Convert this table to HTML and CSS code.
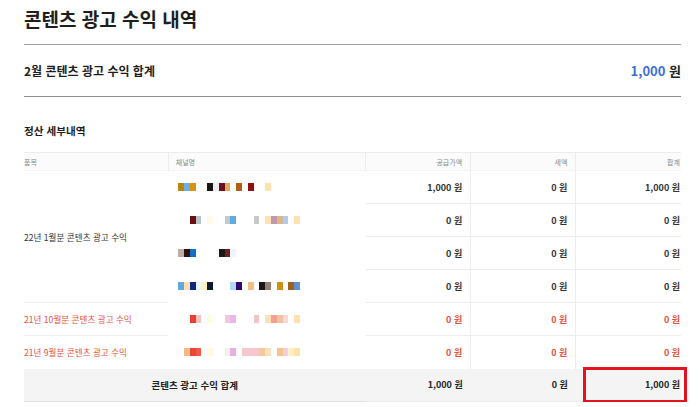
FILE: index.html
```html
<!DOCTYPE html>
<html lang="ko">
<head>
<meta charset="utf-8">
<title>콘텐츠 광고 수익 내역</title>
<link rel="stylesheet" href="styles.css">
</head>
<body>
<div class="page">
  <h1 class="title">콘텐츠 광고 수익 내역</h1>
  <div class="summary">
    <span class="summary-label">2월 콘텐츠 광고 수익 합계</span>
    <span class="summary-value"><span class="amount">1,000</span> 원</span>
  </div>
  <h2 class="section-title">정산 세부내역</h2>
  <table class="detail">
    <colgroup>
      <col class="c-item"><col class="c-channel"><col class="c-num"><col class="c-num"><col class="c-num">
    </colgroup>
    <thead>
      <tr>
        <th class="h-item">품목</th>
        <th class="h-channel">채널명</th>
        <th class="h-num">공급가액</th>
        <th class="h-num">세액</th>
        <th class="h-num last">합계</th>
      </tr>
    </thead>
    <tbody>
      <tr>
        <td class="item" rowspan="4">22년 1월분 콘텐츠 광고 수익</td>
        <td class="channel"><div class="chips"><span style="background:#b8860b"></span><span style="background:#6cb0e4"></span><span style="background:#d8920f"></span><span></span><span></span><span style="background:#151515"></span><span style="background:#ececec"></span><span style="background:#6b1020"></span><span style="background:#e8a860"></span><span></span><span style="background:#b06010"></span><span></span><span style="background:#901010"></span><span></span><span></span><span style="background:#fde2b0"></span></div></td>
        <td class="num">1,000 원</td>
        <td class="num sep">0 원</td>
        <td class="num sep last">1,000 원</td>
      </tr>
      <tr>
        <td class="channel"><div class="chips"><span></span><span></span><span style="background:#6b1010"></span><span style="background:#b8c4c8"></span><span></span><span style="background:#fffbe8"></span><span></span><span></span><span style="background:#c0c8d0"></span><span style="background:#60aae0"></span><span></span><span></span><span></span><span style="background:#c8c8c8"></span><span></span><span style="background:#fde0b8"></span><span style="background:#c09aa8"></span><span style="background:#d8b890"></span><span style="background:#b0cce8"></span><span></span><span style="background:#fde2b0"></span></div></td>
        <td class="num">0 원</td>
        <td class="num sep">0 원</td>
        <td class="num sep last">0 원</td>
      </tr>
      <tr>
        <td class="channel"><div class="chips"><span style="background:#b8b0a8"></span><span style="background:#301010"></span><span style="background:#1070c8"></span><span></span><span></span><span></span><span></span><span style="background:#181818"></span><span style="background:#702020"></span><span style="background:#eaf6fc"></span></div></td>
        <td class="num">0 원</td>
        <td class="num sep">0 원</td>
        <td class="num sep last">0 원</td>
      </tr>
      <tr>
        <td class="channel"><div class="chips"><span style="background:#60a8e0"></span><span style="background:#fce0b0"></span><span style="background:#102880"></span><span style="background:#eaf6fc"></span><span style="background:#fdf0c0"></span><span style="background:#101830"></span><span></span><span></span><span></span><span style="background:#b0d8f8"></span><span style="background:#300870"></span><span></span><span style="background:#f0c080"></span><span></span><span style="background:#181818"></span><span style="background:#908070"></span><span></span><span style="background:#d09010"></span><span></span><span style="background:#a06020"></span><span style="background:#6090d0"></span></div></td>
        <td class="num">0 원</td>
        <td class="num sep">0 원</td>
        <td class="num sep last">0 원</td>
      </tr>
      <tr class="red">
        <td class="item">21년 10월분 콘텐츠 광고 수익</td>
        <td class="channel"><div class="chips"><span></span><span></span><span style="background:#e84030"></span><span style="background:#f4c0c0"></span><span></span><span style="background:#fffbe0"></span><span></span><span></span><span style="background:#f4c8d8"></span><span style="background:#e8b8e8"></span><span></span><span></span><span></span><span style="background:#f4c4c4"></span><span></span><span style="background:#fde0b8"></span><span style="background:#f0a090"></span><span style="background:#f4c0a0"></span><span style="background:#f8d8d8"></span><span></span><span style="background:#fde2b0"></span></div></td>
        <td class="num">0 원</td>
        <td class="num sep">0 원</td>
        <td class="num sep last">0 원</td>
      </tr>
      <tr class="red">
        <td class="item">21년 9월분 콘텐츠 광고 수익</td>
        <td class="channel"><div class="chips"><span></span><span style="background:#f8b888"></span><span style="background:#e84838"></span><span style="background:#f05848"></span><span></span><span style="background:#fffbe0"></span><span></span><span></span><span style="background:#f4f0f0"></span><span style="background:#e8b0e0"></span><span></span><span style="background:#f4c8cc"></span><span style="background:#f4c8cc"></span><span style="background:#f4c8cc"></span><span style="background:#f8c898"></span><span style="background:#fde0c0"></span><span></span><span style="background:#f8c090"></span><span style="background:#f0d0e0"></span><span style="background:#fdf0c8"></span><span style="background:#fde2a8"></span></div></td>
        <td class="num">0 원</td>
        <td class="num sep">0 원</td>
        <td class="num sep last">0 원</td>
      </tr>
    </tbody>
    <tfoot>
      <tr>
        <th class="total-label" colspan="2">콘텐츠 광고 수익 합계</th>
        <td class="num total">1,000 원</td>
        <td class="num total">0 원</td>
        <td class="num total last">1,000 원</td>
      </tr>
    </tfoot>
  </table>
  <div class="highlight"></div>
</div>
</body>
</html>
```

FILE: styles.css
```css
html, body {
  margin: 0;
  padding: 0;
  background: #fff;
}
body {
  font-family: "Noto Sans CJK KR", "Noto Sans", sans-serif;
  color: #222;
}
.page {
  position: relative;
  width: 657px;
  margin-left: 24px;
}
.title {
  margin: 0;
  font-size: 19px;
  font-weight: 700;
  line-height: 37px;
  padding-bottom: 7px;
  border-bottom: 1px solid #a0a0a0;
  color: #1e1e1e;
}
.summary {
  display: flex;
  justify-content: space-between;
  align-items: center;
  height: 51px;
  border-bottom: 1px solid #909090;
  font-weight: 700;
}
.summary-label {
  font-size: 12px;
  color: #1e1e1e;
}
.summary-value {
  font-size: 13px;
  color: #222;
}
.amount {
  color: #3c6fd6;
}
.section-title {
  margin: 0;
  padding-top: 26px;
  margin-bottom: 13px;
  font-size: 10.6px;
  line-height: 16px;
  font-weight: 700;
  color: #1e1e1e;
}
.detail {
  width: 657px;
  border-collapse: collapse;
  table-layout: fixed;
}
.c-item { width: 144px; }
.c-channel { width: 197px; }
.c-num { width: 105px; }
.detail thead tr { height: 18px; }
.detail thead th {
  font-size: 7px;
  font-weight: 400;
  color: #888;
  background: #fbfbfb;
  border-top: 1px solid #ececec;
  border-bottom: 1px solid #f2f2f2;
  padding: 0;
}
.h-item {
  text-align: left;
}
.detail .h-channel {
  text-align: left;
  padding-left: 7px;
  border-left: 1px solid #ececec;
}
.detail .h-num {
  text-align: right;
  padding-right: 8px;
  border-left: 1px solid #ececec;
}
.detail tbody tr { height: 33px; }
.detail td {
  padding: 0;
  vertical-align: middle;
}
.item {
  font-size: 8.6px;
  color: #333;
  text-align: left;
  border-bottom: 1px solid #ececec;
}
.detail .channel {
  padding-left: 10px;
}
.chips {
  display: flex;
}
.chips span {
  width: 5.8px;
  height: 8px;
  flex: none;
}
.detail .num {
  font-size: 9px;
  font-weight: 700;
  color: #333;
  text-align: right;
  padding-right: 8px;
  border-bottom: 1px solid #ececec;
}
.detail .sep {
  border-left: 1px solid #ececec;
}
.detail .red .item, .detail .red .num {
  color: #e4533e;
}
.detail th.last, .detail td.last {
  padding-right: 1px;
}
.detail tbody tr:last-child td {
  border-bottom: none;
}
.detail tfoot tr {
  height: 33px;
  background: #f4f4f4;
}
.total-label {
  font-size: 9.5px;
  font-weight: 700;
  color: #222;
  text-align: center;
  padding: 0;
}
.detail tfoot td, .detail tfoot th {
  border-bottom: 1px solid #e2e2e2;
}
.detail .total {
  color: #222;
}
.highlight {
  position: absolute;
  left: 559px;
  top: 367px;
  width: 98px;
  height: 30px;
  border: 3px solid #e3141d;
}
```
